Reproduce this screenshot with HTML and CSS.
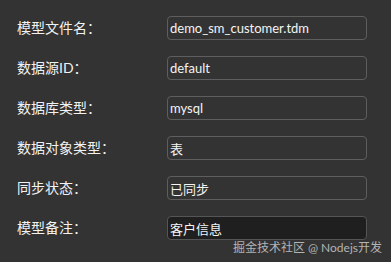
FILE: index.html
```html
<!DOCTYPE html>
<html lang="zh-CN">
<head>
    <meta charset="UTF-8">
    <meta name="viewport" content="width=device-width, initial-scale=1.0">
    <title>模型属性</title>
    <link rel="stylesheet" href="styles.css">
</head>
<body>
    <div class="panel">
        <div class="form-row">
            <label for="file">模型文件名：</label>
            <input type="text" id="file" value="demo_sm_customer.tdm">
        </div>
        <div class="form-row">
            <label for="source">数据源ID：</label>
            <input type="text" id="source" value="default">
        </div>
        <div class="form-row">
            <label for="dbtype">数据库类型：</label>
            <input type="text" id="dbtype" value="mysql">
        </div>
        <div class="form-row">
            <label for="objtype">数据对象类型：</label>
            <input type="text" id="objtype" value="表">
        </div>
        <div class="form-row">
            <label for="sync">同步状态：</label>
            <input type="text" id="sync" value="已同步">
        </div>
        <div class="form-row">
            <label for="remark">模型备注：</label>
            <input type="text" id="remark" class="active" value="客户信息">
        </div>
    </div>
    <div class="watermark">掘金技术社区 @ Nodejs开发</div>
</body>
</html>
```

FILE: styles.css
```css
html, body {
    margin: 0;
    height: 100%;
}
body {
    background-color: #333333;
    font-family: Lato, "Noto Sans CJK SC", sans-serif;
    font-size: 14px;
    color: #f2f2f2;
    position: relative;
    overflow: hidden;
}
.panel {
    display: flex;
    flex-direction: column;
    gap: 16px;
    padding: 16px 0 0 17px;
}
.form-row {
    display: flex;
    align-items: center;
    height: 24px;
}
label {
    width: 150px;
    flex-shrink: 0;
    line-height: 24px;
}
input {
    width: 200px;
    height: 24px;
    box-sizing: border-box;
    padding: 0 2px;
    border: 1px solid #5e5e5e;
    border-radius: 4px;
    background-color: #333333;
    color: #f4f4f4;
    font-family: inherit;
    font-size: 13px;
    outline: none;
}
input.active {
    background-color: #1f1f1f;
    border-color: #555555;
}
.watermark {
    position: absolute;
    right: 9px;
    bottom: 7px;
    color: #b4b4b4;
    font-size: 12px;
    line-height: 14px;
}
```
